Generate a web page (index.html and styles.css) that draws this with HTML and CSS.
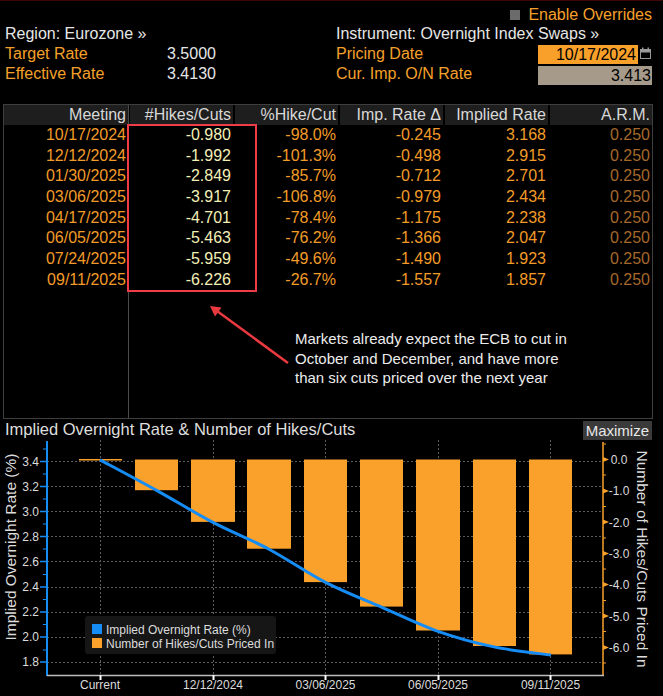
FILE: index.html
```html
<!DOCTYPE html>
<html lang="en">
  <head>
    <meta charset="utf-8" />
    <title>WIRP - Eurozone</title>
    <link rel="stylesheet" href="styles.css">
  </head>
  <body>
    <div class="overrides"><span class="check"></span>Enable Overrides</div>

    <div class="info">
      <div class="info-col">
        <div class="info-row"><span class="title">Region: Eurozone »</span></div>
        <div class="info-row"><span class="label">Target Rate</span><span class="value">3.5000</span></div>
        <div class="info-row"><span class="label">Effective Rate</span><span class="value">3.4130</span></div>
      </div>
      <div class="info-col right">
        <div class="info-row"><span class="title">Instrument: Overnight Index Swaps »</span></div>
        <div class="info-row">
          <span class="label">Pricing Date</span>
          <span class="field date">10/17/2024</span>
          <svg class="cal" width="11" height="12" viewBox="0 0 11 12">
            <rect x="0.5" y="2.5" width="10" height="9" fill="none" stroke="#9a9a9a" />
            <rect x="0.5" y="2.5" width="10" height="3" fill="#9a9a9a" />
            <rect x="2" y="0.5" width="1.5" height="3" fill="#9a9a9a" />
            <rect x="7.5" y="0.5" width="1.5" height="3" fill="#9a9a9a" />
          </svg>
        </div>
        <div class="info-row"><span class="label">Cur. Imp. O/N Rate</span><span class="field rate">3.413</span></div>
      </div>
    </div>

    <div class="panel">
      <div class="table">
        <div class="th">Meeting</div>
        <div class="th">#Hikes/Cuts</div>
        <div class="th">%Hike/Cut</div>
        <div class="th">Imp. Rate Δ</div>
        <div class="th">Implied Rate</div>
        <div class="th">A.R.M.</div>

        <div class="td date">10/17/2024</div><div class="td hikes">-0.980</div><div class="td">-98.0%</div><div class="td">-0.245</div><div class="td">3.168</div><div class="td arm">0.250</div>
        <div class="td date">12/12/2024</div><div class="td hikes">-1.992</div><div class="td">-101.3%</div><div class="td">-0.498</div><div class="td">2.915</div><div class="td arm">0.250</div>
        <div class="td date">01/30/2025</div><div class="td hikes">-2.849</div><div class="td">-85.7%</div><div class="td">-0.712</div><div class="td">2.701</div><div class="td arm">0.250</div>
        <div class="td date">03/06/2025</div><div class="td hikes">-3.917</div><div class="td">-106.8%</div><div class="td">-0.979</div><div class="td">2.434</div><div class="td arm">0.250</div>
        <div class="td date">04/17/2025</div><div class="td hikes">-4.701</div><div class="td">-78.4%</div><div class="td">-1.175</div><div class="td">2.238</div><div class="td arm">0.250</div>
        <div class="td date">06/05/2025</div><div class="td hikes">-5.463</div><div class="td">-76.2%</div><div class="td">-1.366</div><div class="td">2.047</div><div class="td arm">0.250</div>
        <div class="td date">07/24/2025</div><div class="td hikes">-5.959</div><div class="td">-49.6%</div><div class="td">-1.490</div><div class="td">1.923</div><div class="td arm">0.250</div>
        <div class="td date">09/11/2025</div><div class="td hikes">-6.226</div><div class="td">-26.7%</div><div class="td">-1.557</div><div class="td">1.857</div><div class="td arm">0.250</div>
      </div>

      <div class="highlight"></div>
      <svg class="arrow" viewBox="0 0 648 313">
        <line x1="284" y1="258" x2="213" y2="206" stroke="#ea3a40" stroke-width="2.5" />
        <polygon points="206,201 217.5,202.5 211,211.5" fill="#ea3a40" />
      </svg>
      <p class="note">Markets already expect the ECB to cut in<br>October and December, and have more<br>than six cuts priced over the next year</p>
    </div>

    <div class="chart-head">
      <span>Implied Overnight Rate &amp; Number of Hikes/Cuts</span>
      <span class="btn">Maximize</span>
    </div>

    <svg class="chart" width="663" height="255" viewBox="0 441 663 255">
      <!-- grid -->
      <g stroke="#5c5c5c" stroke-width="1" stroke-dasharray="2 2" fill="none">
        <path d="M47,462.5H603M47,487.5H603M47,512.5H603M47,537.5H603M47,562.5H603M47,588.5H603M47,613.5H603M47,638.5H603M47,663.5H603" />
        <path d="M100.5,441V676M213.5,441V676M325.5,441V676M438.5,441V676M550.5,441V676" />
      </g>

      <!-- bars: number of hikes/cuts -->
      <g fill="#f9a12b">
        <rect x="79" y="460" width="43" height="1.5" />
        <rect x="135" y="460.5" width="43" height="30.7" />
        <rect x="191" y="460.5" width="44" height="62.4" />
        <rect x="247" y="460.5" width="44" height="89.2" />
        <rect x="304" y="460.5" width="43" height="122.6" />
        <rect x="360" y="460.5" width="43" height="147.1" />
        <rect x="416" y="460.5" width="44" height="171" />
        <rect x="473" y="460.5" width="43" height="186.5" />
        <rect x="529" y="460.5" width="43" height="194.9" />
      </g>

      <!-- implied overnight rate -->
      <path d="M100,460.9 C109.5,466 138.2,481.2 157,491.6 C175.8,502 194.3,513.6 213,523.4 C231.7,533.2 250.2,540.2 269,550.2 C287.8,560.3 307.2,574 326,583.7 C344.8,593.4 363.3,600.2 382,608.3 C400.7,616.4 419.3,625.7 438,632.3 C456.7,638.9 475.2,643.9 494,647.9 C512.8,651.9 541.5,654.7 551,656.1" fill="none" stroke="#168cf5" stroke-width="3" />

      <!-- left axis -->
      <g stroke="#168cf5">
        <path d="M47,442V677" stroke-width="2" />
        <path d="M40,462.5H47M40,487.5H47M40,512.5H47M40,537.5H47M40,562.5H47M40,588H47M40,613H47M40,638H47M40,663H47" stroke-width="1.6" />
        <path d="M43,450H47M43,475H47M43,500H47M43,525H47M43,550H47M43,575.5H47M43,600.5H47M43,625.5H47M43,651H47" stroke-width="1" />
      </g>

      <!-- right axis -->
      <g stroke="#f9a12b" fill="#f9a12b">
        <path d="M603,443V677" stroke-width="1.5" />
        <path d="M603,445H606M603,476H606M603,507.5H606M603,539H606M603,570H606M603,601.5H606M603,632.5H606M603,664H606" stroke-width="1" />
        <path d="M603,458L609,460.5L603,463ZM603,489.5L609,492L603,494.5ZM603,520.5L609,523L603,525.5ZM603,552L609,554.5L603,557ZM603,583L609,585.5L603,588ZM603,614.5L609,617L603,619.5ZM603,646L609,648.5L603,651Z" stroke="none" />
      </g>

      <!-- bottom axis -->
      <path d="M47,676.5H604" stroke="#bdbdbd" stroke-width="1.5" />
      <path d="M100.5,676V681M213.5,676V681M325.5,676V681M438.5,676V681M550.5,676V681" stroke="#ffffff" stroke-width="2" />

      <g class="ticks" text-anchor="end">
        <text x="39" y="466.5">3.4</text>
        <text x="39" y="491.5">3.2</text>
        <text x="39" y="516.5">3.0</text>
        <text x="39" y="541.5">2.8</text>
        <text x="39" y="566.5">2.6</text>
        <text x="39" y="592">2.4</text>
        <text x="39" y="617">2.2</text>
        <text x="39" y="642">2.0</text>
        <text x="39" y="667">1.8</text>
      </g>
      <g class="ticks" text-anchor="middle">
        <text x="619" y="465">0.0</text>
        <text x="619" y="496">-1.0</text>
        <text x="619" y="527.5">-2.0</text>
        <text x="619" y="559">-3.0</text>
        <text x="619" y="590">-4.0</text>
        <text x="619" y="621.5">-5.0</text>
        <text x="619" y="653">-6.0</text>
      </g>
      <g class="ticks" text-anchor="middle">
        <text x="100" y="689.5">Current</text>
        <text x="213" y="689.5">12/12/2024</text>
        <text x="325.5" y="689.5">03/06/2025</text>
        <text x="438" y="689.5">06/05/2025</text>
        <text x="550.5" y="689.5">09/11/2025</text>
      </g>

      <text class="axis-title" text-anchor="middle" transform="translate(16,548) rotate(-90)">Implied Overnight Rate (%)</text>
      <text class="axis-title" text-anchor="middle" transform="translate(637,560) rotate(90)">Number of Hikes/Cuts Priced In</text>

      <!-- legend -->
      <rect x="85" y="617" width="191" height="38" rx="3" fill="#161616" />
      <rect x="92" y="625" width="10" height="10" fill="#168cf5" />
      <rect x="92" y="639" width="10" height="10" fill="#f9a12b" />
      <text class="ticks" x="106" y="634.5">Implied Overnight Rate (%)</text>
      <text class="ticks" x="106" y="648.5">Number of Hikes/Cuts Priced In</text>
    </svg>
  </body>
</html>
```

FILE: styles.css
```css
body {
  margin: 0;
  background-color: #000;
  border-top: 1px solid #3d0707;
  font-family: "Liberation Sans", Arial, sans-serif;
  font-size: 16px;
  color: #e6e6e6;
}
.overrides {
  padding: 5px 11px 0 0;
  height: 18px;
  line-height: 18px;
  text-align: right;
  color: #f5a02a;
}
.check {
  display: inline-block;
  width: 10px;
  height: 10px;
  margin-right: 8px;
  background-color: #6b6b6b;
  vertical-align: 0;
}
.info {
  display: flex;
}
.info-col {
  width: 331px;
  padding-left: 5px;
}
.info-col.right {
  width: auto;
  padding-left: 0;
}
.info-row {
  display: flex;
  align-items: flex-start;
  height: 20px;
  line-height: 20px;
  white-space: nowrap;
}
.label {
  width: 162px;
  color: #f5a02a;
}
.right .label {
  width: 202px;
}
.field {
  box-sizing: border-box;
  height: 19px;
  line-height: 19px;
  color: #000;
  text-align: right;
}
.field.date {
  width: 100px;
  margin-top: 1px;
  padding-right: 2px;
  background-color: #f8a02a;
}
.field.rate {
  width: 114px;
  margin-top: 2px;
  padding-right: 1px;
  background-color: #a69b8b;
}
.cal {
  margin: 3px 0 0 2px;
}
.panel {
  position: relative;
  box-sizing: border-box;
  width: 650px;
  height: 315px;
  margin: 20px 0 0 3px;
  border: 1px solid #3e3e3e;
  background: linear-gradient(#4a4a4a, #4a4a4a) 124px 0 / 1px 100% no-repeat;
}
.table {
  display: grid;
  grid-template-columns: 124px 105px 105px 105px 105px 1fr;
  grid-template-rows: 20px;
  grid-auto-rows: 20.7px;
}
.th,
.td {
  padding-right: 2px;
  text-align: right;
  white-space: nowrap;
  overflow: hidden;
}
.th {
  line-height: 20px;
  color: #d8d8d8;
  background-color: #1e1e1e;
}
.th + .th {
  margin-left: 2px;
}
.td {
  line-height: 20.7px;
  color: #f29b28;
}
.td.hikes {
  color: #f3efb6;
}
.td.arm {
  color: #a5682a;
}
.highlight {
  position: absolute;
  left: 123px;
  top: 19px;
  width: 130px;
  height: 168px;
  box-sizing: border-box;
  border: 2px solid #f03c46;
}
.arrow {
  position: absolute;
  left: 0;
  top: 0;
  width: 648px;
  height: 313px;
}
.note {
  position: absolute;
  left: 291px;
  top: 224px;
  margin: 0;
  font-size: 15px;
  line-height: 19.5px;
  color: #ececec;
}
.chart-head {
  display: flex;
  justify-content: space-between;
  align-items: flex-start;
  height: 21px;
  padding: 0 11px 0 5px;
  font-size: 16.5px;
  line-height: 21px;
  color: #dedede;
}
.btn {
  height: 19px;
  margin-top: 2px;
  padding: 0 3px;
  font-size: 15px;
  line-height: 19px;
  color: #e8e8e8;
  background-color: #3a3a3a;
}
.chart {
  display: block;
}
.ticks {
  font-family: "Liberation Sans", Arial, sans-serif;
  font-size: 12px;
  fill: #dcdcdc;
}
.axis-title {
  font-family: "Liberation Sans", Arial, sans-serif;
  font-size: 15.5px;
  fill: #dcdcdc;
}
```
